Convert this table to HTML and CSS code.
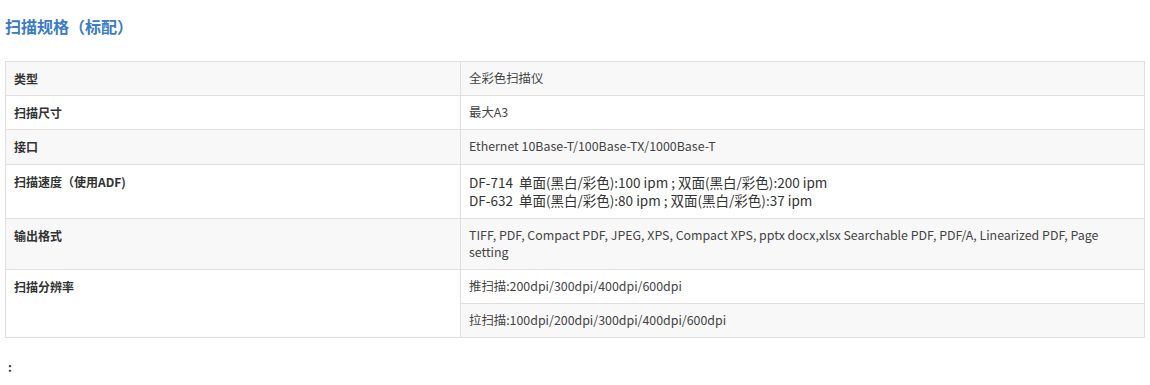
FILE: index.html
```html
<!DOCTYPE html>
<html lang="zh-CN">
<head>
<meta charset="utf-8">
<title>扫描规格</title>
<link rel="stylesheet" href="styles.css">
</head>
<body>
<div class="page">
  <h3 class="title">扫描规格（标配）</h3>
  <table class="spec">
    <colgroup><col class="c1"><col class="c2"></colgroup>
    <tbody>
      <tr class="odd"><th>类型</th><td>全彩色扫描仪</td></tr>
      <tr><th>扫描尺寸</th><td>最大A3</td></tr>
      <tr class="odd tall"><th>接口</th><td>Ethernet 10Base-T/100Base-TX/1000Base-T</td></tr>
      <tr><th>扫描速度（使用ADF)</th><td class="big">DF-714&nbsp; 单面(黑白/彩色):100 ipm ; 双面(黑白/彩色):200 ipm<br>DF-632&nbsp; 单面(黑白/彩色):80 ipm ; 双面(黑白/彩色):37 ipm</td></tr>
      <tr class="odd"><th>输出格式</th><td>TIFF, PDF, Compact PDF, JPEG, XPS, Compact XPS, pptx docx,xlsx Searchable PDF, PDF/A, Linearized PDF, Page setting</td></tr>
      <tr><th rowspan="2" class="white">扫描分辨率</th><td>推扫描:200dpi/300dpi/400dpi/600dpi</td></tr>
      <tr class="odd"><td>拉扫描:100dpi/200dpi/300dpi/400dpi/600dpi</td></tr>
    </tbody>
  </table>
  <p class="colon">:</p>
</div>
</body>
</html>
```

FILE: styles.css
```css
html, body {
  margin: 0;
  padding: 0;
  background: #fff;
}
.page {
  padding: 0 5px;
  font-family: "Noto Sans CJK SC", "Noto Sans", sans-serif;
  color: #333;
}
.title {
  margin: 0;
  padding-top: 15px;
  height: 61px;
  box-sizing: border-box;
  font-size: 16px;
  line-height: 22px;
  font-weight: bold;
  color: #3a7cc6;
}
.spec {
  width: 1140px;
  border-collapse: collapse;
  font-size: 12px;
  line-height: 17px;
}
.c1 { width: 455px; }
.spec th, .spec td {
  border: 1px solid #e4dddd;
  padding: 8px;
  text-align: left;
  vertical-align: top;
  color: #444;
}
.spec td {
  font-family: "Noto Sans CJK SC", "Noto Sans", sans-serif;
  font-size: 12.4px;
}
.spec th {
  font-weight: bold;
  color: #333;
}
.spec tr.tall th, .spec tr.tall td {
  padding-bottom: 9px;
}
.spec tr.odd th, .spec tr.odd td {
  background: #f8f8f8;
}
.spec th.white {
  background: #fff;
}
.spec td.big {
  font-size: 13.5px;
  line-height: 18px;
  padding-bottom: 9px;
  color: #333;
}
.colon {
  margin: 20px 0 0 3px;
  font-size: 12px;
  font-weight: bold;
  color: #333;
}
```
